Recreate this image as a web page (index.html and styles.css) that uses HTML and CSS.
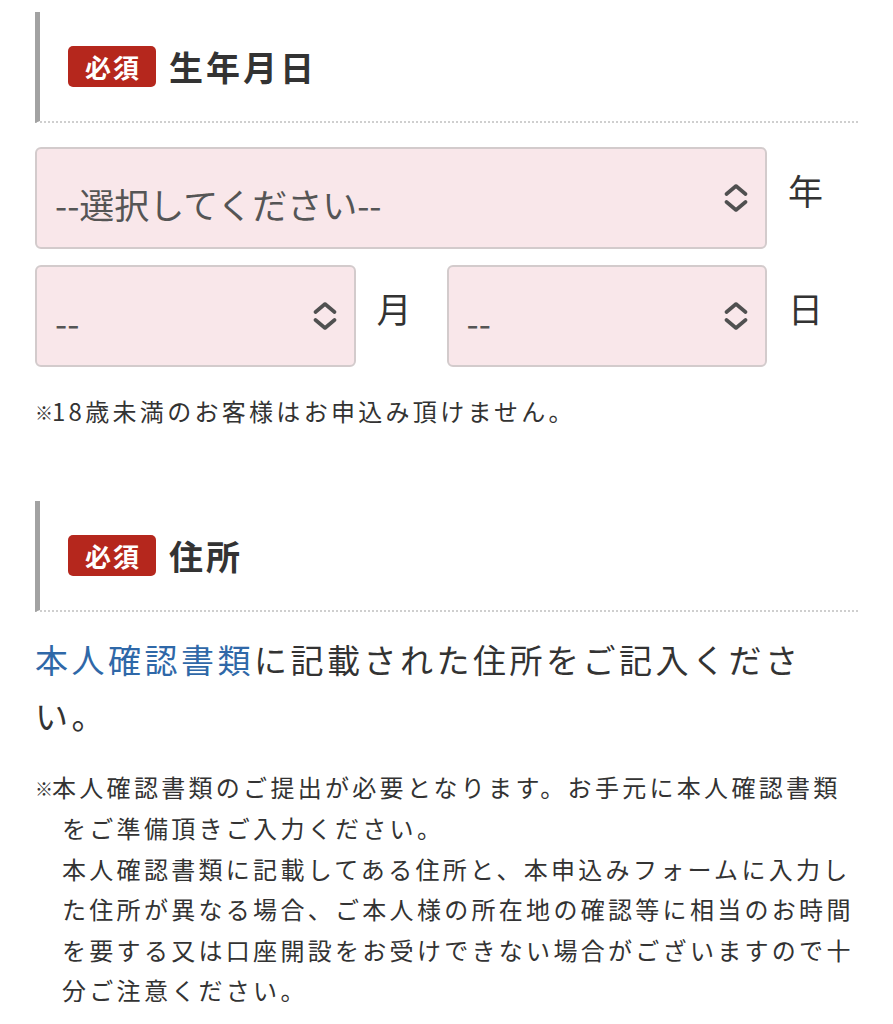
FILE: index.html
```html
<!DOCTYPE html>
<html lang="ja">
<head>
  <meta charset="UTF-8" />
  <meta name="viewport" content="width=device-width, initial-scale=1.0" />
  <title>お申込みフォーム</title>
  <link rel="stylesheet" href="styles.css">
</head>
<body>

  <div class="form">

    <!-- 生年月日 -->
    <section class="field field-birth">
      <div class="field-head">
        <span class="req">必須</span>
        <h2 class="field-title">生年月日</h2>
      </div>

      <div class="date-row">
        <div class="date-item">
          <div class="select-wrap">
            <select name="birth_year">
              <option>--選択してください--</option>
            </select>
            <svg class="select-arrow" viewBox="0 0 24 30" width="24" height="30">
              <path d="M2.5 11 L12 3 L21.5 11 M2.5 19 L12 27 L21.5 19" />
            </svg>
          </div>
          <span class="date-unit">年</span>
        </div>
      </div>

      <div class="date-row">
        <div class="date-item">
          <div class="select-wrap">
            <select name="birth_month">
              <option>--</option>
            </select>
            <svg class="select-arrow" viewBox="0 0 24 30" width="24" height="30">
              <path d="M2.5 11 L12 3 L21.5 11 M2.5 19 L12 27 L21.5 19" />
            </svg>
          </div>
          <span class="date-unit">月</span>
        </div>
        <div class="date-item">
          <div class="select-wrap">
            <select name="birth_day">
              <option>--</option>
            </select>
            <svg class="select-arrow" viewBox="0 0 24 30" width="24" height="30">
              <path d="M2.5 11 L12 3 L21.5 11 M2.5 19 L12 27 L21.5 19" />
            </svg>
          </div>
          <span class="date-unit">日</span>
        </div>
      </div>

      <p class="note note-age"><span class="kome">※</span>18歳未満のお客様はお申込み頂けません。</p>
    </section>

    <!-- 住所 -->
    <section class="field field-address">
      <div class="field-head">
        <span class="req">必須</span>
        <h2 class="field-title">住所</h2>
      </div>

      <p class="lead"><a href="#" class="lead-link">本人確認書類</a>に記載された住所をご記入ください。</p>

      <p class="note note-id"><span class="kome">※</span>本人確認書類のご提出が必要となります。お手元に本人確認書類をご準備頂きご入力ください。<br>本人確認書類に記載してある住所と、本申込みフォームに入力した住所が異なる場合、ご本人様の所在地の確認等に相当のお時間を要する又は口座開設をお受けできない場合がございますので十分ご注意ください。</p>
    </section>

  </div>

</body>
</html>
```

FILE: styles.css
```css
body {
  margin: 0;
  font-family: "Noto Sans CJK JP", sans-serif;
  color: #333;
  background: #fff;
}
.form {
  padding: 12px 35px 0;
}
.field + .field {
  margin-top: 68px;
}

/* 見出し */
.field-head {
  display: flex;
  align-items: center;
  box-sizing: border-box;
  height: 111px;
  padding-left: 28px;
  border-left: 5px solid #a2a2a2;
  border-bottom: 2px dotted #cfcfcf;
}
.req {
  display: inline-flex;
  align-items: center;
  justify-content: center;
  width: 88px;
  height: 41px;
  border-radius: 5px;
  background: #b5271d;
  color: #fff;
  font-size: 26px;
  font-weight: 700;
  letter-spacing: 2px;
  text-indent: 2px;
}
.field-title {
  margin: 0 0 0 13px;
  font-size: 34px;
  font-weight: 700;
  letter-spacing: 3px;
  color: #333;
}

/* 生年月日 */
.date-row {
  display: flex;
  margin-top: 16px;
}
.field-head + .date-row {
  margin-top: 24px;
}
.date-item {
  display: flex;
  align-items: center;
  flex: 1;
}
.select-wrap {
  position: relative;
  flex: 1;
}
.select-wrap select {
  appearance: none;
  -webkit-appearance: none;
  display: block;
  box-sizing: border-box;
  width: 100%;
  height: 102px;
  margin: 0;
  padding: 10px 60px 0 18px;
  border: 2px solid #d3cbcc;
  border-radius: 6px;
  background: #f9e7ea;
  color: #555;
  font-family: "Noto Sans CJK JP", sans-serif;
  font-size: 35px;
  outline: none;
}
.select-arrow {
  position: absolute;
  top: 50%;
  right: 19px;
  margin-top: -15px;
  fill: none;
  stroke: #505050;
  stroke-width: 3.6;
  stroke-linecap: round;
  stroke-linejoin: round;
  pointer-events: none;
}
.date-unit {
  flex: none;
  box-sizing: border-box;
  width: 91px;
  padding: 0 0 18px 21px;
  font-size: 35px;
  color: #333;
}

/* 注記 */
.note {
  margin: 0;
  padding-left: 27px;
  text-indent: -27px;
  font-size: 24px;
  line-height: 40.5px;
  letter-spacing: 3.3px;
  color: #333;
}
.note-age {
  margin-top: 24px;
}
.note-id {
  margin-top: 24px;
}
.kome {
  font-size: 18px;
  letter-spacing: -1px;
  vertical-align: 1px;
}

/* 住所 */
.lead {
  margin: 19px 0 0;
  font-size: 33px;
  line-height: 56px;
  letter-spacing: 3.5px;
  color: #333;
}
.lead-link {
  color: #2f68a8;
  text-decoration: none;
}
```
